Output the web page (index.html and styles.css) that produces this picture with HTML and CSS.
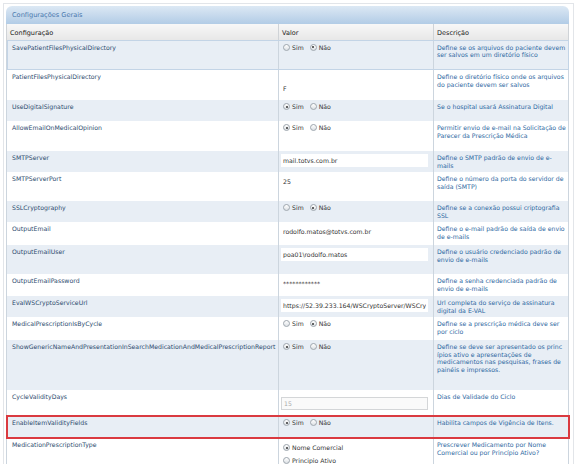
FILE: index.html
```html
<!DOCTYPE html>
<html lang="pt-BR">
<head>
    <meta charset="UTF-8">
    <meta name="viewport" content="width=device-width, initial-scale=1.0">
    <title>Configurações Gerais</title>
    <link rel="stylesheet" href="styles.css">
</head>
<body>
    <div class="wrapper">
        <div class="panel">
            <div class="panel-title">Configurações Gerais</div>

            <table class="config-table">
                <colgroup>
                    <col class="col-name">
                    <col class="col-value">
                    <col class="col-desc">
                </colgroup>
                <thead>
                    <tr>
                        <th>Configuração</th>
                        <th>Valor</th>
                        <th>Descrição</th>
                    </tr>
                </thead>
                <tbody>
                    <tr class="alt focus h30">
                        <td class="name">SavePatientFilesPhysicalDirectory</td>
                        <td class="value">
                            <label class="opt"><span class="radio"></span>Sim</label>
                            <label class="opt"><span class="radio checked"></span>Não</label>
                        </td>
                        <td class="desc">Define se os arquivos do paciente devem ser salvos em um diretório físico</td>
                    </tr>
                    <tr class="h30">
                        <td class="name">PatientFilesPhysicalDirectory</td>
                        <td class="value"><input class="field low" type="text" value="F"></td>
                        <td class="desc">Define o diretório físico onde os arquivos do paciente devem ser salvos</td>
                    </tr>
                    <tr class="alt h21">
                        <td class="name">UseDigitalSignature</td>
                        <td class="value">
                            <label class="opt"><span class="radio checked"></span>Sim</label>
                            <label class="opt"><span class="radio"></span>Não</label>
                        </td>
                        <td class="desc">Se o hospital usará Assinatura Digital</td>
                    </tr>
                    <tr class="h30">
                        <td class="name">AllowEmailOnMedicalOpinion</td>
                        <td class="value">
                            <label class="opt"><span class="radio checked"></span>Sim</label>
                            <label class="opt"><span class="radio"></span>Não</label>
                        </td>
                        <td class="desc">Permitir envio de e-mail na Solicitação de Parecer da Prescrição Médica</td>
                    </tr>
                    <tr class="alt h21">
                        <td class="name">SMTPServer</td>
                        <td class="value"><input class="field" type="text" value="mail.totvs.com.br"></td>
                        <td class="desc">Define o SMTP padrão de envio de e-mails</td>
                    </tr>
                    <tr class="h29">
                        <td class="name">SMTPServerPort</td>
                        <td class="value"><input class="field" type="text" value="25"></td>
                        <td class="desc">Define o número da porta do servidor de saída (SMTP)</td>
                    </tr>
                    <tr class="alt h21">
                        <td class="name">SSLCryptography</td>
                        <td class="value">
                            <label class="opt"><span class="radio"></span>Sim</label>
                            <label class="opt"><span class="radio checked"></span>Não</label>
                        </td>
                        <td class="desc">Define se a conexão possui criptografia SSL</td>
                    </tr>
                    <tr class="h23">
                        <td class="name">OutputEmail</td>
                        <td class="value"><input class="field" type="text" value="rodolfo.matos@totvs.com.br"></td>
                        <td class="desc">Define o e-mail padrão de saída de envio de e-mails</td>
                    </tr>
                    <tr class="alt h29">
                        <td class="name">OutputEmailUser</td>
                        <td class="value"><input class="field" type="text" value="poa01\rodolfo.matos"></td>
                        <td class="desc">Define o usuário credenciado padrão de envio de e-mails</td>
                    </tr>
                    <tr class="h22">
                        <td class="name">OutputEmailPassword</td>
                        <td class="value"><input class="field" type="text" value="************"></td>
                        <td class="desc">Define a senha credenciada padrão de envio de e-mails</td>
                    </tr>
                    <tr class="alt h21">
                        <td class="name">EvalWSCryptoServiceUrl</td>
                        <td class="value"><input class="field" type="text" value="https://52.39.233.164/WSCryptoServer/WSCryptoService.svc"></td>
                        <td class="desc">Url completa do serviço de assinatura digital da E-VAL</td>
                    </tr>
                    <tr class="h23">
                        <td class="name">MedicalPrescriptionIsByCycle</td>
                        <td class="value">
                            <label class="opt"><span class="radio"></span>Sim</label>
                            <label class="opt"><span class="radio checked"></span>Não</label>
                        </td>
                        <td class="desc">Define se a prescrição médica deve ser por ciclo</td>
                    </tr>
                    <tr class="alt h50">
                        <td class="name">ShowGenericNameAndPresentationInSearchMedicationAndMedicalPrescriptionReport</td>
                        <td class="value">
                            <label class="opt"><span class="radio checked"></span>Sim</label>
                            <label class="opt"><span class="radio"></span>Não</label>
                        </td>
                        <td class="desc">Define se deve ser apresentado os princ ípios ativo e apresentações de medicamentos nas pesquisas, frases de painéis e impressos.</td>
                    </tr>
                    <tr class="h26">
                        <td class="name">CycleValidityDays</td>
                        <td class="value"><input class="field disabled" type="text" value="15" disabled></td>
                        <td class="desc">Dias de Validade do Ciclo</td>
                    </tr>
                    <tr class="alt h22 flagged">
                        <td class="name">EnableItemValidityFields</td>
                        <td class="value">
                            <label class="opt"><span class="radio checked"></span>Sim</label>
                            <label class="opt"><span class="radio"></span>Não</label>
                        </td>
                        <td class="desc">Habilita campos de Vigência de Itens.</td>
                    </tr>
                    <tr class="h30">
                        <td class="name">MedicationPrescriptionType</td>
                        <td class="value stack">
                            <label class="opt"><span class="radio checked"></span>Nome Comercial</label>
                            <label class="opt"><span class="radio"></span>Principio Ativo</label>
                        </td>
                        <td class="desc">Prescrever Medicamento por Nome Comercial ou por Princípio Ativo?</td>
                    </tr>
                </tbody>
            </table>
        </div>
    </div>
</body>
</html>
```

FILE: styles.css
```css
body {
    margin: 0;
    background-color: #fff;
    font-family: "DejaVu Sans", Verdana, sans-serif;
    font-size: 6.2px;
    color: #333;
}
.wrapper {
    margin: 3px 3px 0 3px;
    padding: 2px 4px 0 2px;
    border: 1px solid #e2e5e9;
    border-bottom: none;
    height: 470px;
    overflow: hidden;
}
.panel-title {
    height: 18px;
    line-height: 19px;
    padding-left: 6px;
    border-radius: 6px 6px 0 0;
    background: linear-gradient(#dce8f4, #b2cce6);
    color: #4978ad;
    font-size: 6.6px;
}
.config-table {
    width: 100%;
    border-collapse: collapse;
    table-layout: fixed;
}
.col-name {
    width: 272px;
}
.col-value {
    width: 155px;
}
th {
    height: 16px;
    padding: 5px 3px 0 3px;
    box-sizing: border-box;
    vertical-align: top;
    text-align: left;
    font-weight: normal;
    font-size: 6.5px;
    line-height: 8px;
    color: #222;
    background: linear-gradient(#f7f7f7, #e7e7e7);
    border: 1px solid #cfd3d7;
    border-top: none;
}
td {
    padding: 3px 1px 3px 5px;
    vertical-align: top;
    line-height: 7.5px;
    border-left: 1px solid #ccd5de;
    border-right: 1px solid #ccd5de;
}
tr.alt td {
    background-color: #e8eef5;
}
tr.focus {
    outline: 1px solid #c3d4e6;
    outline-offset: -1px;
}
tr.flagged {
    outline: 2px solid #da3a40;
    outline-offset: -1px;
}
.h21 { height: 21px; }
.h22 { height: 22px; }
.h23 { height: 23px; }
.h26 { height: 26px; }
.h29 { height: 29px; }
.h30 { height: 30px; }
.h50 { height: 50px; }
.name {
    color: #2d4b6e;
    white-space: nowrap;
    overflow: hidden;
}
.desc {
    padding-left: 3px;
    color: #2f69a2;
}
.value {
    color: #333;
}
.opt {
    display: inline-flex;
    align-items: center;
    gap: 2px;
    margin-right: 5px;
    margin-left: -1px;
}
.stack .opt {
    display: flex;
    height: 13px;
}
.radio {
    position: relative;
    width: 5px;
    height: 5px;
    border: 1px solid #9ea6ae;
    border-radius: 50%;
    background: linear-gradient(#fff, #dde1e5);
}
.radio.checked::after {
    content: "";
    position: absolute;
    left: 1.5px;
    top: 1.5px;
    width: 2px;
    height: 2px;
    border-radius: 50%;
    background-color: #333;
}
.field {
    display: block;
    box-sizing: border-box;
    width: 147px;
    height: 13px;
    margin: 0 0 0 -3px;
    padding: 0 2px;
    border: none;
    background-color: #fff;
    font: inherit;
    color: #333;
}
.field.low {
    margin-top: 9px;
}
.field.disabled {
    margin-top: 4px;
    border: 1px solid #d4d6d8;
    background-color: #fafafa;
    color: #aaa;
}
```
